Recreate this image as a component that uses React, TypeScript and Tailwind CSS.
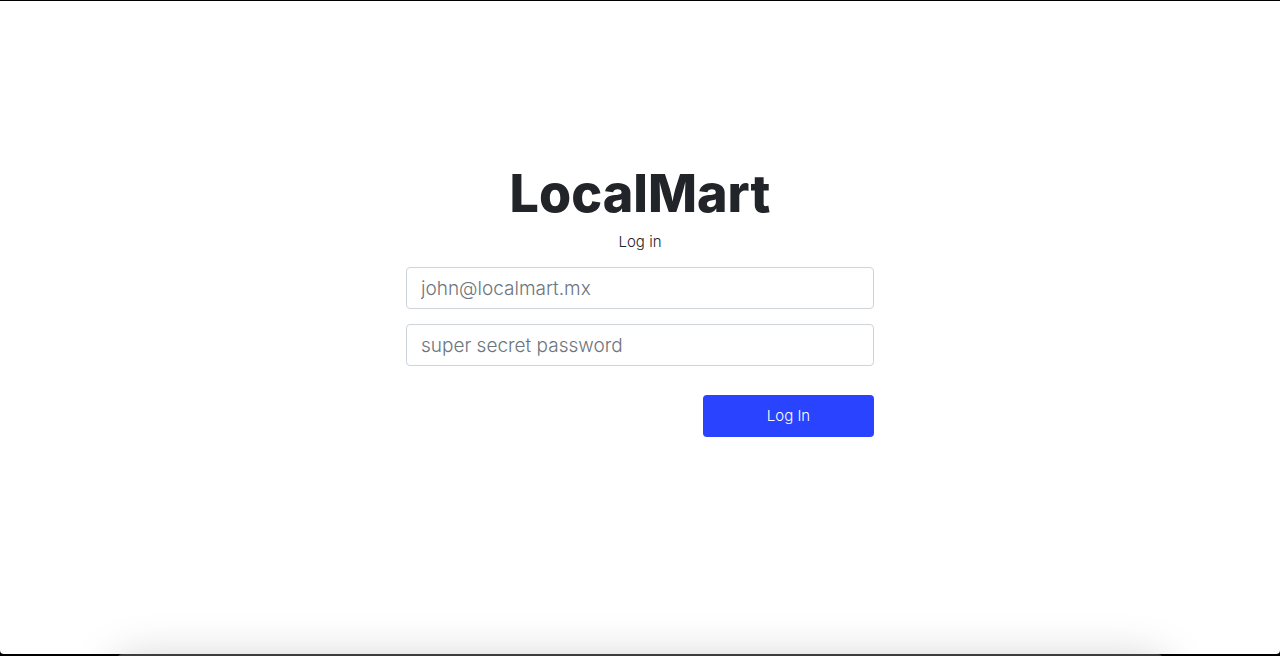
import { useState } from "react";
import type { FormEvent } from "react";

const fieldClass =
  "h-[42px] w-full rounded border border-[#ced4da] bg-white px-3.5 pt-0.5 text-[19px] font-light text-[#495057] outline-none placeholder:text-[#6c757d] focus:border-[#2a43ff]";

function LoginForm() {
  const [email, setEmail] = useState("");
  const [password, setPassword] = useState("");
  const submit = (event: FormEvent) => event.preventDefault();

  return (
    <form onSubmit={submit} className="flex w-full max-w-[468px] flex-col">
      <h1 className="text-center text-[52px] leading-[58px] font-extrabold">LocalMart</h1>
      <p className="mt-2 mb-3.5 text-center text-[15px] leading-[22px] font-light">Log in</p>
      <div className="flex flex-col gap-[15px]">
        <input
          type="email"
          aria-label="Email"
          placeholder="john@localmart.mx"
          value={email}
          onChange={(e) => setEmail(e.target.value)}
          className={fieldClass}
        />
        <input
          type="password"
          aria-label="Password"
          placeholder="super secret password"
          value={password}
          onChange={(e) => setPassword(e.target.value)}
          className={fieldClass}
        />
      </div>
      <button
        type="submit"
        className="mt-[29px] h-[42px] w-[171px] self-end rounded bg-[#2a43ff] pt-0.5 text-[15px] font-light text-white"
      >
        Log In
      </button>
    </form>
  );
}

export default function App() {
  return (
    <div className="relative flex min-h-screen flex-col overflow-hidden bg-black pt-px pb-0.5 font-['Inter',sans-serif] text-[#212529]">
      <main className="flex grow flex-col items-center justify-center rounded-b-sm bg-white px-4 pb-[54px]">
        <LoginForm />
      </main>
      <div className="absolute inset-x-[118px] -bottom-16 h-[66px] rounded bg-[#3c3c3e] shadow-[0_8px_48px_rgba(0,0,0,0.22)]" />
    </div>
  );
}
